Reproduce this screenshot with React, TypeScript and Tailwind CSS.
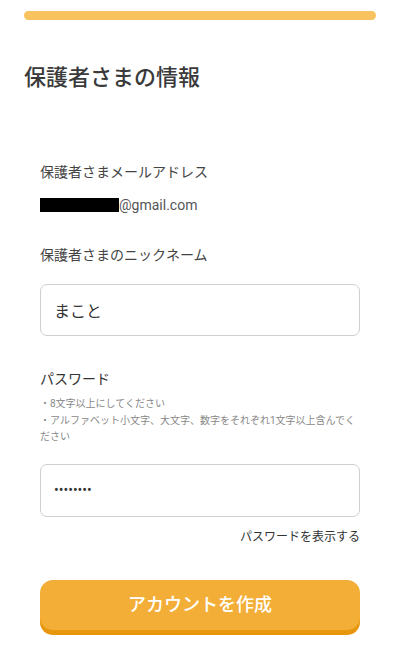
export default function App() {
  return (
    <div className="min-h-[649px] w-full bg-white px-6 font-['Roboto','Noto_Sans_CJK_JP',sans-serif] text-[#333]">
      <div className="pt-[11px]">
        <div className="h-[9px] w-full rounded-full bg-[#f8c35e]" />
      </div>

      <h1 className="mt-[42px] text-[22px] font-medium leading-[32px] text-[#3a3a3a]">
        保護者さまの情報
      </h1>

      <div className="mt-[68px] px-4">
        <p className="text-[14px] leading-[20px] text-[#444]">保護者さまメールアドレス</p>
        <p className="mt-[13px] flex items-center text-[14px] leading-[20px] text-[#555]">
          <span className="inline-block h-[14px] w-[79px] bg-black" />
          <span>@gmail.com</span>
        </p>

        <p className="mt-[30px] text-[14px] leading-[20px] text-[#444]">保護者さまのニックネーム</p>
        <input
          className="mt-[19px] block h-[52px] w-full rounded-[7px] border border-[#cfcfcf] px-[13px] text-[16px] text-[#333] outline-none"
          defaultValue="まこと"
        />

        <p className="mt-[33px] text-[14px] leading-[20px] text-[#333]">パスワード</p>
        <div className="mt-[7px] text-[10px] leading-[16.5px] text-[#888]">
          <p>・8文字以上にしてください</p>
          <p>・アルファベット小文字、大文字、数字をそれぞれ1文字以上含んでください</p>
        </div>
        <input
          type="password"
          className="mt-[18px] block h-[53px] w-full rounded-[7px] border border-[#cfcfcf] px-[13px] text-[14px] text-[#333] outline-none"
          defaultValue="password"
        />
        <div className="mt-[10px] text-right text-[12px] leading-[20px] text-[#333]">
          パスワードを表示する
        </div>

        <button className="mt-[33px] block h-[50px] w-full rounded-[13px] bg-[#f3ae38] text-[18px] font-medium text-white shadow-[0_5px_0_#e9960f]">
          アカウントを作成
        </button>
      </div>
    </div>
  );
}
